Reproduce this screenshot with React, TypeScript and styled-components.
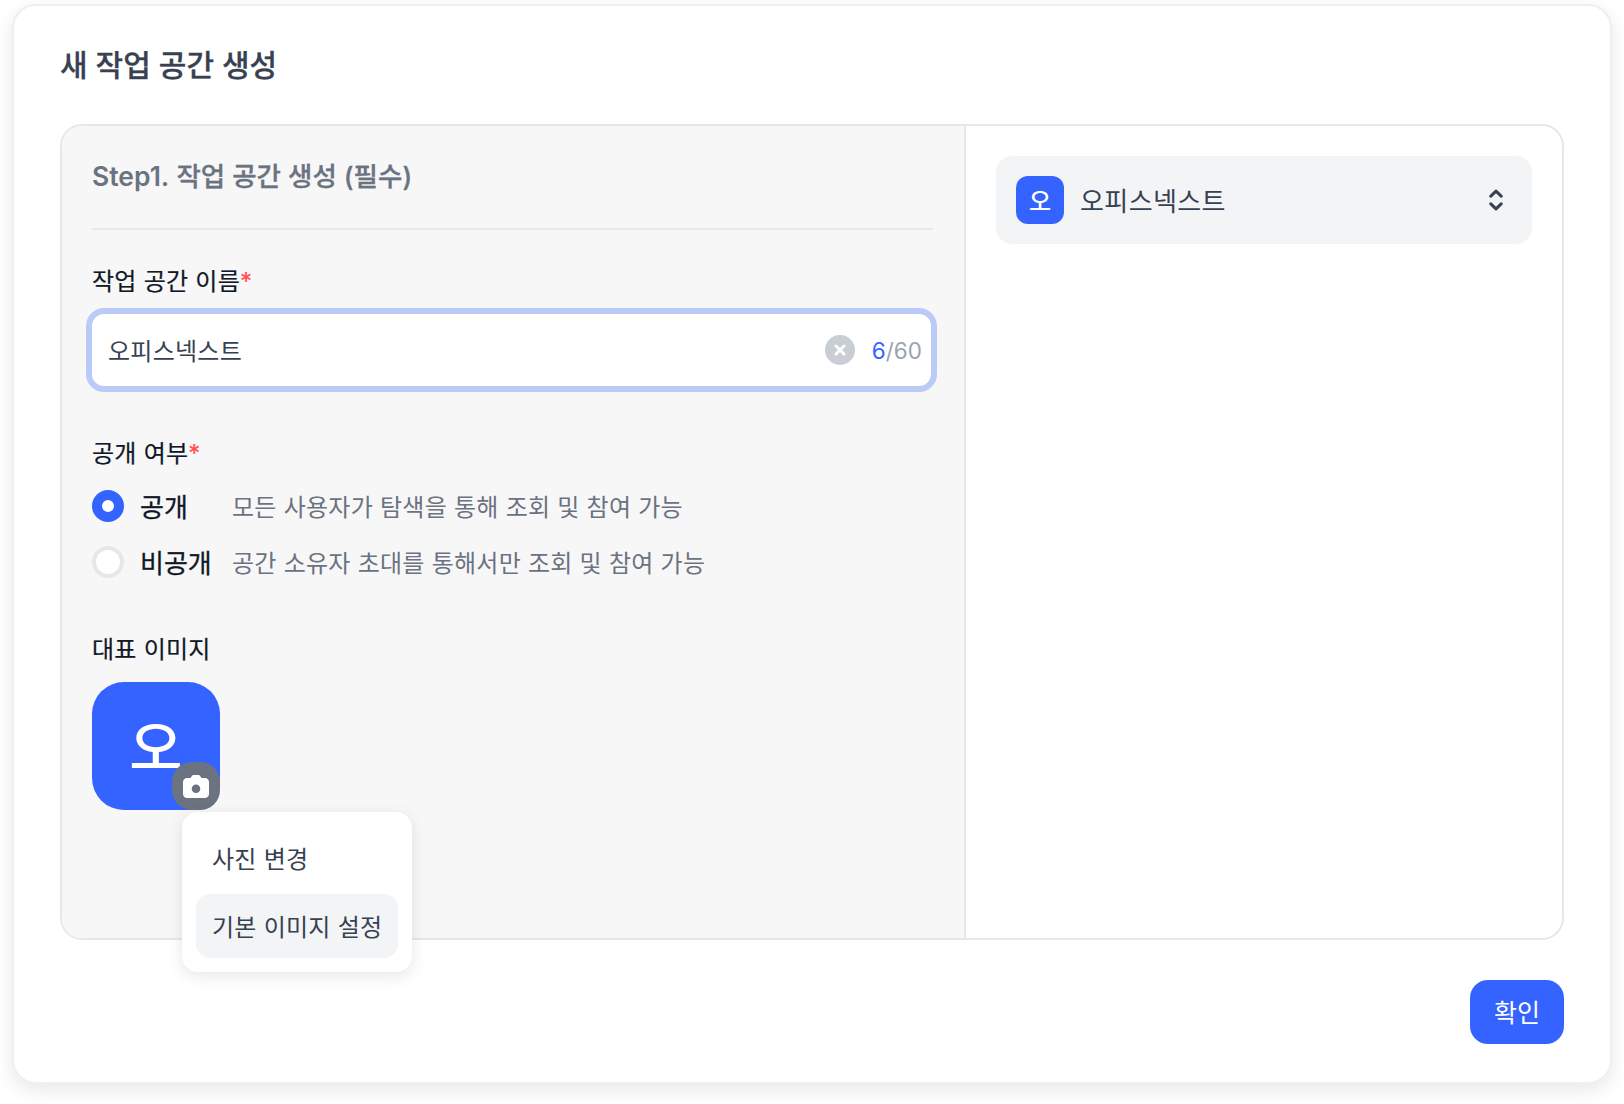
import React from "react";
import styled, { createGlobalStyle } from "styled-components";

const BLUE = "#3563ff";

const GlobalStyle = createGlobalStyle`
  html, body {
    margin: 0;
    padding: 0;
    background: #ffffff;
  }
  body {
    min-height: 100vh;
    font-family: Inter, "Noto Sans CJK KR", sans-serif;
  }
  #root {
    padding-top: 4px;
  }
  * {
    box-sizing: border-box;
  }
`;

const Modal = styled.div`
  display: flex;
  flex-direction: column;
  width: 1600px;
  height: 1080px;
  margin-left: 12px;
  padding: 34px 46px 38px;
  background: #ffffff;
  border: 2px solid #efeff1;
  border-radius: 24px;
  box-shadow: 0 6px 18px rgba(17, 24, 39, 0.1);
`;

const Title = styled.h2`
  margin: 0 0 34px;
  height: 50px;
  font-size: 30px;
  line-height: 50px;
  font-weight: 500;
  color: #374151;
  -webkit-text-stroke: 0.3px currentColor;
`;

const Panel = styled.div`
  display: grid;
  grid-template-columns: 904px 1fr;
  height: 816px;
  border: 2px solid #e5e7eb;
  border-radius: 22px;
`;

const LeftPane = styled.div`
  padding: 32px 31px 0 30px;
  background: #f7f7f8;
  border-right: 2px solid #e5e7eb;
  border-radius: 20px 0 0 20px;
`;

const RightPane = styled.div`
  padding: 30px;
`;

const StepTitle = styled.div`
  height: 72px;
  font-size: 26.5px;
  line-height: 36px;
  font-weight: 500;
  color: #6b7280;
  border-bottom: 2px solid #e5e7eb;
  -webkit-text-stroke: 0.3px currentColor;
`;

const StepLatin = styled.span`
  font-weight: 600;
  -webkit-text-stroke: 0;
`;

const Label = styled.div<{ $top: number }>`
  margin-top: ${(p) => p.$top}px;
  font-size: 24px;
  line-height: 36px;
  letter-spacing: 0.25px;
  color: #111827;
  -webkit-text-stroke: 0.2px currentColor;
`;

const Required = styled.span`
  color: #ff4d4f;
`;

const InputBox = styled.div`
  display: flex;
  align-items: center;
  width: 851px;
  height: 84px;
  margin: 8px 0 0 -6px;
  padding: 0 9px 0 16px;
  background: #ffffff;
  border: 6px solid #bbcbf8;
  border-radius: 18px;
`;

const InputValue = styled.div`
  flex: 1;
  padding-bottom: 2px;
  font-size: 24px;
  letter-spacing: 0.25px;
  color: #374151;
`;

const ClearButton = styled.div`
  display: flex;
  align-items: center;
  justify-content: center;
  width: 30px;
  height: 30px;
  margin-right: 17px;
  background: #c9cdd4;
  border-radius: 50%;
`;

const Counter = styled.div`
  font-size: 22.5px;
  color: #9ca3af;
`;

const CounterNow = styled.span`
  color: ${BLUE};
`;

const RadioGroup = styled.div`
  display: flex;
  flex-direction: column;
  gap: 24px;
  margin-top: 18px;
`;

const RadioRow = styled.div`
  display: flex;
  align-items: center;
  height: 32px;
`;

const RadioDot = styled.span<{ $on?: boolean }>`
  width: 32px;
  height: 32px;
  margin-right: 16px;
  background: #ffffff;
  border-radius: 50%;
  border: ${(p) => (p.$on ? `10px solid ${BLUE}` : "4px solid #e5e7eb")};
`;

const RadioName = styled.span`
  width: 92px;
  padding-bottom: 2px;
  font-size: 26px;
  color: #111827;
  -webkit-text-stroke: 0.3px currentColor;
`;

const RadioHint = styled.span`
  padding-bottom: 2px;
  font-size: 24px;
  letter-spacing: 0.25px;
  color: #6b7280;
`;

const AvatarWrap = styled.div`
  position: relative;
  width: 128px;
  height: 128px;
  margin-top: 14px;
`;

const Avatar = styled.div<{ $size: number; $radius: number; $font: number }>`
  display: flex;
  flex: none;
  align-items: center;
  justify-content: center;
  width: ${(p) => p.$size}px;
  height: ${(p) => p.$size}px;
  padding-bottom: ${(p) => Math.round(p.$font * 0.07)}px;
  background: ${BLUE};
  border-radius: ${(p) => p.$radius}px;
  font-size: ${(p) => p.$font}px;
  font-weight: 500;
  color: #ffffff;
`;

const CameraBadge = styled.div`
  position: absolute;
  right: 0;
  bottom: 0;
  display: flex;
  align-items: center;
  justify-content: center;
  width: 48px;
  height: 48px;
  background: #6b7280;
  border-radius: 20px;
`;

const Popover = styled.div`
  position: absolute;
  top: 130px;
  left: 90px;
  display: flex;
  flex-direction: column;
  gap: 4px;
  width: 230px;
  height: 160px;
  padding: 14px;
  background: #ffffff;
  border-radius: 16px;
  box-shadow: 0 4px 16px rgba(17, 24, 39, 0.1);
`;

const MenuItem = styled.div<{ $active?: boolean }>`
  display: flex;
  align-items: center;
  height: 64px;
  padding: 0 16px 2px;
  font-size: 24px;
  letter-spacing: 0.25px;
  color: #374151;
  white-space: nowrap;
  border-radius: 14px;
  background: ${(p) => (p.$active ? "#f3f4f6" : "transparent")};
`;

const Select = styled.div`
  display: flex;
  align-items: center;
  gap: 16px;
  height: 88px;
  padding: 0 29px 0 20px;
  background: #f3f4f6;
  border-radius: 16px;
`;

const SelectName = styled.div`
  flex: 1;
  padding-bottom: 2px;
  font-size: 26px;
  letter-spacing: 0.4px;
  color: #374151;
`;

const Footer = styled.div`
  display: flex;
  justify-content: flex-end;
  margin-top: 40px;
`;

const ConfirmButton = styled.button`
  width: 94px;
  height: 64px;
  padding: 0 0 3px;
  background: ${BLUE};
  border: none;
  border-radius: 18px;
  font-family: inherit;
  font-size: 25px;
  color: #ffffff;
`;

const CloseIcon = () => (
  <svg width="14" height="14" viewBox="0 0 14 14" fill="none" stroke="#fff" strokeWidth="3" strokeLinecap="round">
    <path d="M3 3l8 8M11 3l-8 8" />
  </svg>
);

const CameraIcon = () => (
  <svg width="26" height="23" viewBox="0 0 26 23">
    <path
      fill="#fff"
      fillRule="evenodd"
      d="M8.500 1.500C8.900.6 9.700 0 10.700 0h4.600c1 0 1.800.6 2.200 1.500L18.300 3H22c2.200 0 4 1.800 4 4v12c0 2.200-1.800 4-4 4H4c-2.200 0-4-1.800-4-4V7c0-2.200 1.800-4 4-4h3.700zM13 18a4.300 4.300 0 1 0 0-8.600 4.300 4.300 0 0 0 0 8.600z"
    />
  </svg>
);

const UpDownIcon = () => (
  <svg width="14" height="22" viewBox="0 0 14 22" fill="none" stroke="#374151" strokeWidth="3" strokeLinecap="round" strokeLinejoin="round">
    <path d="M1.800 7.200L7 2.200l5.200 5M1.800 14.800L7 19.800l5.200-5" />
  </svg>
);

export default function App() {
  return (
    <>
      <GlobalStyle />
      <Modal>
        <Title>새 작업 공간 생성</Title>
        <Panel>
          <LeftPane>
            <StepTitle>
              <StepLatin>Step1.</StepLatin> 작업 공간 생성 (필수)
            </StepTitle>
            <Label $top={34}>
              작업 공간 이름<Required>*</Required>
            </Label>
            <InputBox>
              <InputValue>오피스넥스트</InputValue>
              <ClearButton>
                <CloseIcon />
              </ClearButton>
              <Counter>
                <CounterNow>6</CounterNow>/60
              </Counter>
            </InputBox>
            <Label $top={44}>
              공개 여부<Required>*</Required>
            </Label>
            <RadioGroup>
              <RadioRow>
                <RadioDot $on />
                <RadioName>공개</RadioName>
                <RadioHint>모든 사용자가 탐색을 통해 조회 및 참여 가능</RadioHint>
              </RadioRow>
              <RadioRow>
                <RadioDot />
                <RadioName>비공개</RadioName>
                <RadioHint>공간 소유자 초대를 통해서만 조회 및 참여 가능</RadioHint>
              </RadioRow>
            </RadioGroup>
            <Label $top={54}>대표 이미지</Label>
            <AvatarWrap>
              <Avatar $size={128} $radius={32} $font={58}>
                오
              </Avatar>
              <CameraBadge>
                <CameraIcon />
              </CameraBadge>
              <Popover>
                <MenuItem>사진 변경</MenuItem>
                <MenuItem $active>기본 이미지 설정</MenuItem>
              </Popover>
            </AvatarWrap>
          </LeftPane>
          <RightPane>
            <Select>
              <Avatar $size={48} $radius={12} $font={24}>
                오
              </Avatar>
              <SelectName>오피스넥스트</SelectName>
              <UpDownIcon />
            </Select>
          </RightPane>
        </Panel>
        <Footer>
          <ConfirmButton>확인</ConfirmButton>
        </Footer>
      </Modal>
    </>
  );
}
